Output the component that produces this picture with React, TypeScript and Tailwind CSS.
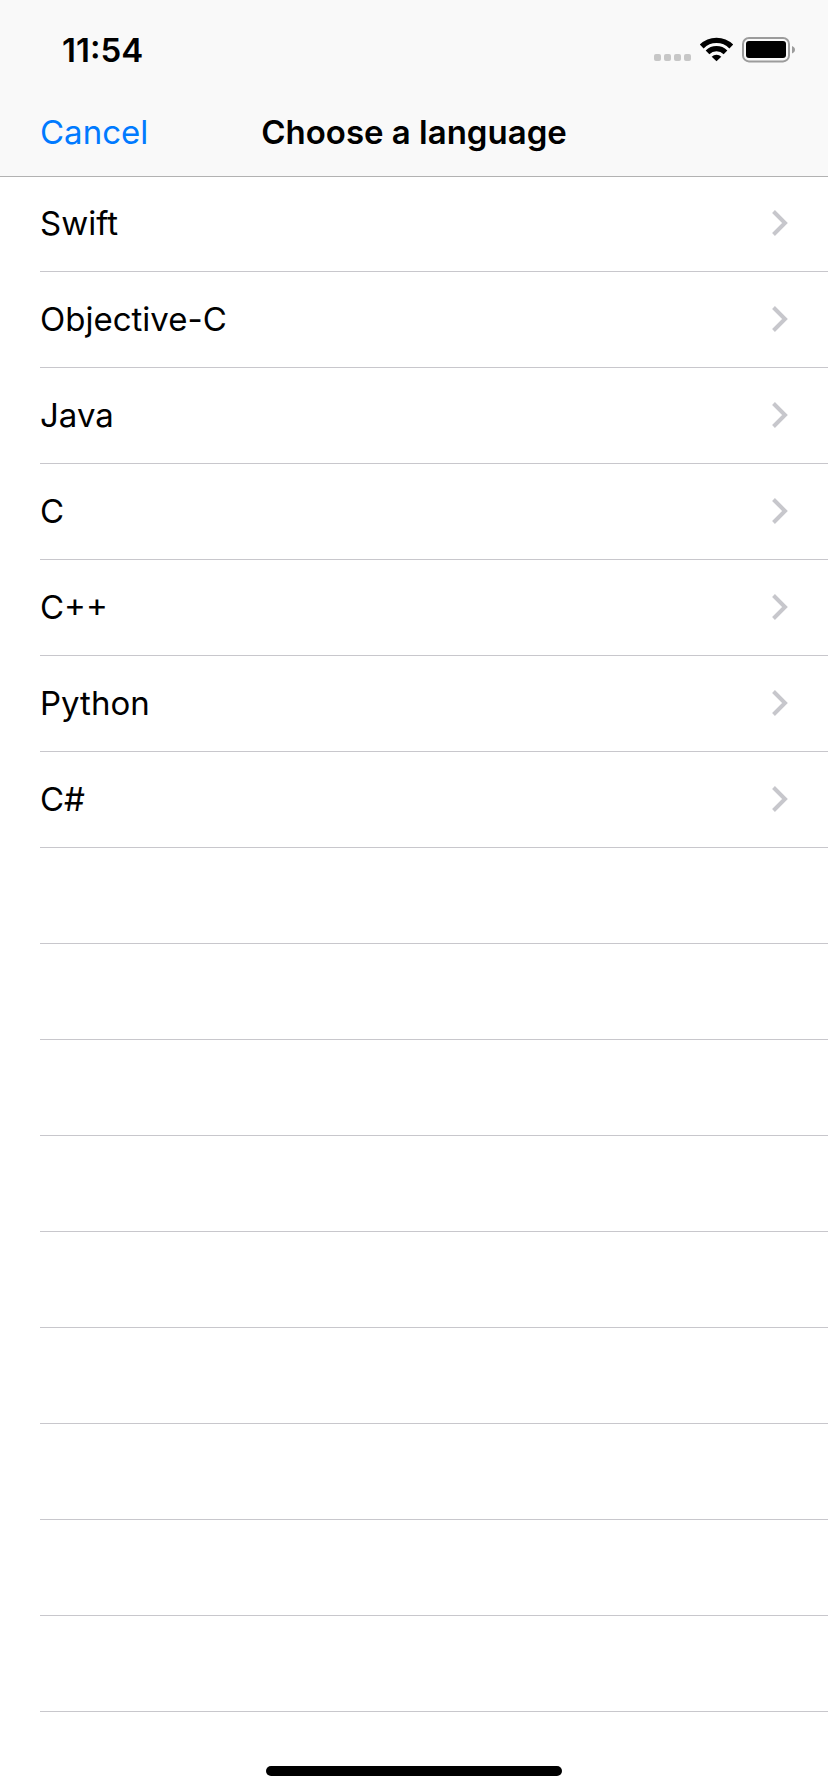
const languages = ['Swift', 'Objective-C', 'Java', 'C', 'C++', 'Python', 'C#'];
const emptyRows = Array.from({ length: 9 }, (_, i) => i);

function StatusIcons() {
  return (
    <svg width="142" height="26" viewBox="0 0 142 26" role="img" aria-label="No signal, Wi-Fi on, battery full">
      <g fill="#c7c7c7">
        <rect x="0" y="17" width="7" height="7" rx="2" />
        <rect x="10" y="17" width="7" height="7" rx="2" />
        <rect x="20" y="17" width="7" height="7" rx="2" />
        <rect x="30" y="17" width="7" height="7" rx="2" />
      </g>
      <g fill="none" stroke="#000">
        <path d="M47.700 9.500a21 21 0 0 1 29.600 0" strokeWidth="5.400" />
        <path d="M53.500 15.400a12.800 12.800 0 0 1 18 0" strokeWidth="5.200" />
      </g>
      <path d="M62.5 24.300l-4.800-4.600a6.800 6.800 0 0 1 9.600 0z" />
      <rect x="89" y="1" width="46" height="23.4" rx="6" fill="none" stroke="#9c9c9c" strokeWidth="2" />
      <rect x="92" y="4" width="40" height="17" rx="3" />
      <path d="M138 9c1.8.8 3 2.1 3 3.8s-1.200 3-3 3.800z" fill="#9c9c9c" />
    </svg>
  );
}

function Chevron() {
  return (
    <svg width="16" height="26" viewBox="0 0 16 26" fill="none" stroke="#c7c7cc" strokeWidth="4" aria-hidden="true">
      <path d="M1.500 1.500L13 13L1.500 24.500" />
    </svg>
  );
}

export default function App() {
  return (
    <div className="flex min-h-screen flex-col bg-white font-[Inter,'Liberation_Sans',sans-serif] text-black">
      <header className="border-b border-[#b2b2b2] bg-[#f9f9f9]">
        <div className="flex h-[88px] items-center justify-between pt-3 pr-8 pl-[62px]">
          <time className="text-[33px] leading-10 font-semibold">11:54</time>
          <StatusIcons />
        </div>
        <div className="grid h-[88px] grid-cols-[1fr_auto_1fr] items-center px-10">
          <button type="button" className="justify-self-start text-[33px] leading-10 text-[#007aff]">
            Cancel
          </button>
          <h1 className="text-[33px] leading-10 font-semibold">Choose a language</h1>
        </div>
      </header>
      <main className="-mt-px flex-1 pl-10">
        <ul>
          {languages.map((name) => (
            <li key={name} className="border-b border-[#c8c7cc]">
              <button type="button" className="flex h-[95px] w-full items-center justify-between pr-10 pb-0.5 text-left text-[33px] leading-10">
                <span>{name}</span>
                <Chevron />
              </button>
            </li>
          ))}
        </ul>
        {emptyRows.map((row) => (
          <div key={row} className="h-24 border-b border-[#c8c7cc]" />
        ))}
      </main>
      <footer className="flex justify-center pb-4">
        <div className="h-[10px] w-[296px] rounded-full bg-black" />
      </footer>
    </div>
  );
}
